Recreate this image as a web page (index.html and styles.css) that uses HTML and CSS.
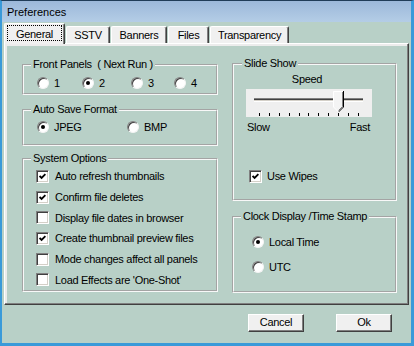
FILE: index.html
```html
<!DOCTYPE html>
<html lang="en">

<head>
    <meta charset="UTF-8">
    <title>Preferences</title>
    <link rel="stylesheet" href="styles.css">
</head>

<body>
    <div class="window">
        <div class="titlebar">Preferences</div>

        <div class="tabs">
            <div class="tab tab-active"><span class="focus">General</span></div>
            <div class="tab tab-sstv">SSTV</div>
            <div class="tab tab-banners">Banners</div>
            <div class="tab tab-files">Files</div>
            <div class="tab tab-transparency">Transparency</div>
        </div>

        <div class="panel">
            <div class="col col-left">
                <fieldset class="group group-panels">
                    <legend>Front Panels&nbsp; ( Next Run )</legend>
                    <div class="group-body panels-row">
                        <div class="opt"><span class="radio"></span>1</div>
                        <div class="opt"><span class="radio checked"></span>2</div>
                        <div class="opt"><span class="radio"></span>3</div>
                        <div class="opt"><span class="radio"></span>4</div>
                    </div>
                </fieldset>

                <fieldset class="group group-save">
                    <legend>Auto Save Format</legend>
                    <div class="group-body save-row">
                        <div class="opt"><span class="radio checked"></span>JPEG</div>
                        <div class="opt"><span class="radio"></span>BMP</div>
                    </div>
                </fieldset>

                <fieldset class="group group-system">
                    <legend>System Options</legend>
                    <div class="group-body system-list">
                        <div class="opt check-row">
                            <span class="check"><svg width="7" height="7" viewBox="0 0 7 7"><polyline points="0.6,3 2.6,5 6.4,1.2" fill="none" stroke="#000" stroke-width="1.8"/></svg></span>
                            Auto refresh thumbnails
                        </div>
                        <div class="opt check-row">
                            <span class="check"><svg width="7" height="7" viewBox="0 0 7 7"><polyline points="0.6,3 2.6,5 6.4,1.2" fill="none" stroke="#000" stroke-width="1.8"/></svg></span>
                            Confirm file deletes
                        </div>
                        <div class="opt check-row"><span class="check"></span>Display file dates in browser</div>
                        <div class="opt check-row">
                            <span class="check"><svg width="7" height="7" viewBox="0 0 7 7"><polyline points="0.6,3 2.6,5 6.4,1.2" fill="none" stroke="#000" stroke-width="1.8"/></svg></span>
                            Create thumbnail preview files
                        </div>
                        <div class="opt check-row"><span class="check"></span>Mode changes affect all panels</div>
                        <div class="opt check-row"><span class="check"></span>Load Effects are 'One-Shot'</div>
                    </div>
                </fieldset>
            </div>

            <div class="col col-right">
                <fieldset class="group group-slide">
                    <legend>Slide Show</legend>
                    <div class="group-body slide-body">
                        <div class="speed-label">Speed</div>
                        <svg class="slider" width="126" height="28" viewBox="0 0 126 28">
                            <rect x="0" y="0" width="126" height="28" fill="#efefef"/>
                            <!-- track -->
                            <rect x="8" y="9" width="109" height="1" fill="#808080"/>
                            <rect x="8" y="10" width="109" height="1" fill="#404040"/>
                            <rect x="8" y="11" width="109" height="1" fill="#d4d0c8"/>
                            <rect x="8" y="12" width="109" height="1" fill="#fff"/>
                            <!-- ticks -->
                            <g stroke="#000" stroke-width="1">
                                <line x1="13.5" y1="24" x2="13.5" y2="27"/>
                                <line x1="23.5" y1="24" x2="23.5" y2="27"/>
                                <line x1="33.5" y1="24" x2="33.5" y2="27"/>
                                <line x1="43.5" y1="24" x2="43.5" y2="27"/>
                                <line x1="53.5" y1="24" x2="53.5" y2="27"/>
                                <line x1="62.5" y1="24" x2="62.5" y2="27"/>
                                <line x1="72.5" y1="24" x2="72.5" y2="27"/>
                                <line x1="82.5" y1="24" x2="82.5" y2="27"/>
                                <line x1="92.5" y1="24" x2="92.5" y2="27"/>
                                <line x1="102.5" y1="24" x2="102.5" y2="27"/>
                                <line x1="112.5" y1="24" x2="112.5" y2="27"/>
                            </g>
                            <!-- thumb -->
                            <polygon points="87,2 98,2 98,18 92.5,23.5 87,18" fill="#f4f4f4"/>
                            <polyline points="87.5,18 87.5,2.5 97,2.5" fill="none" stroke="#fff" stroke-width="1"/>
                            <polyline points="96.5,3 96.5,17.5 92.5,21.5" fill="none" stroke="#808080" stroke-width="1"/>
                            <polyline points="97.5,2 97.5,18 92.5,23" fill="none" stroke="#000" stroke-width="1"/>
                            <polyline points="87.5,18 92.5,23" fill="none" stroke="#fff" stroke-width="1"/>
                        </svg>
                        <div class="slider-labels"><span>Slow</span><span>Fast</span></div>
                        <div class="opt wipes-row">
                            <span class="check"><svg width="7" height="7" viewBox="0 0 7 7"><polyline points="0.6,3 2.6,5 6.4,1.2" fill="none" stroke="#000" stroke-width="1.8"/></svg></span>
                            Use Wipes
                        </div>
                    </div>
                </fieldset>

                <fieldset class="group group-clock">
                    <legend>Clock Display /Time Stamp</legend>
                    <div class="group-body clock-list">
                        <div class="opt"><span class="radio checked"></span>Local Time</div>
                        <div class="opt"><span class="radio"></span>UTC</div>
                    </div>
                </fieldset>
            </div>
        </div>

        <div class="buttons">
            <div class="button">Cancel</div>
            <div class="button">Ok</div>
        </div>
    </div>
</body>

</html>
```

FILE: styles.css
```css
* {
    box-sizing: border-box;
}

body {
    margin: 0;
    padding: 0;
    font-family: "Liberation Sans", Arial, sans-serif;
    font-size: 11px;
    color: #000;
    background-color: #b8d0c7;
}

.window {
    width: 414px;
    height: 346px;
    display: flex;
    flex-direction: column;
    background-color: #b8d0c7;
    border: 2px solid #3a9ad9;
    border-top: 1px solid #203c58;
    border-right-width: 3px;
    border-bottom-width: 3px;
    letter-spacing: -0.3px;
}

.titlebar {
    height: 21px;
    flex: 0 0 21px;
    padding-left: 5px;
    line-height: 22px;
    letter-spacing: 0;
    background: linear-gradient(to bottom, #9cb8da, #b4cde6);
}

/* tab strip */
.tabs {
    height: 21px;
    flex: 0 0 21px;
    display: flex;
    align-items: flex-end;
    padding-left: 2px;
}

.tab {
    height: 17px;
    margin-left: 1px;
    padding-top: 1px;
    line-height: 14px;
    text-align: center;
    background-color: #f0f0f0;
    border: 1px solid;
    border-color: #fff #404040 transparent #fff;
    border-bottom: none;
    border-radius: 2px 2px 0 0;
    box-shadow: inset -1px 0 0 #808080;
}

.tab-active {
    position: relative;
    z-index: 1;
    width: 61px;
    height: 21px;
    margin-left: 0;
    margin-bottom: -1px;
    padding: 1px 2px 0 2px;
}

.tab-active .focus {
    display: block;
    height: 16px;
    padding-top: 1px;
    line-height: 14px;
    border: 1px dotted #000;
}

.tab-sstv { width: 44px; }
.tab-banners { width: 56px; }
.tab-files { width: 41px; }
.tab-transparency { width: 79px; }

/* page */
.panel {
    height: 262px;
    flex: 0 0 262px;
    margin: 0 2px;
    display: flex;
    gap: 14px;
    padding: 13px 10px 0 17px;
    border: 1px solid;
    border-color: #fff #404040 #404040 #fff;
    box-shadow: inset -1px -1px 0 #808080, inset 2px 2px 0 #ececec;
}

.col-left {
    width: 196px;
    margin-top: 1px;
}

.col-right {
    width: 165px;
}

.group {
    margin: 0;
    padding: 0;
    min-width: 0;
    border: 2px groove #f8f8f8;
}

.group legend {
    margin-left: 7px;
    padding: 0 2px;
    line-height: 13px;
}

.group-slide legend {
    margin-left: 8px;
}

.group-panels { height: 37px; }
.group-save { height: 43px; margin-top: 8px; }
.group-system { height: 140px; margin-top: 6px; }
.group-slide { height: 144px; }
.group-clock { height: 83px; margin-top: 9px; }

.opt {
    display: flex;
    align-items: center;
    gap: 5px;
    height: 16px;
}

.panels-row {
    display: grid;
    grid-template-columns: 45px 49px 43px auto;
    padding: 4px 0 0 13px;
}

.save-row {
    display: grid;
    grid-template-columns: 90px auto;
    padding: 3px 0 0 13px;
}

.system-list {
    padding: 1px 0 0 12px;
}

.check-row {
    height: 20.7px;
    gap: 6px;
}

.clock-list {
    display: flex;
    flex-direction: column;
    row-gap: 9px;
    padding: 11px 0 0 18px;
}

/* controls */
.radio {
    width: 12px;
    height: 12px;
    flex: 0 0 12px;
    display: flex;
    align-items: center;
    justify-content: center;
    border-radius: 50%;
    background-color: #fff;
    border: 1px solid;
    border-color: #808080 #f4f4f4 #f4f4f4 #808080;
    box-shadow: inset 1px 1px 0 #404040;
}

.radio.checked::after {
    content: "";
    width: 4px;
    height: 4px;
    border-radius: 50%;
    background-color: #000;
}

.check {
    width: 13px;
    height: 13px;
    flex: 0 0 13px;
    display: flex;
    align-items: center;
    justify-content: center;
    background-color: #fff;
    border: 1px solid;
    border-color: #808080 #fff #fff #808080;
    box-shadow: inset 1px 1px 0 #404040, inset -1px -1px 0 #d4d0c8;
}

/* slide show */
.slide-body {
    padding-left: 12px;
}

.speed-label {
    width: 122px;
    margin-top: 3px;
    line-height: 13px;
    text-align: center;
}

.slider {
    display: block;
    margin-top: 3px;
}

.slider-labels {
    width: 124px;
    margin-top: 4px;
    padding-left: 1px;
    display: flex;
    justify-content: space-between;
    line-height: 13px;
}

.wipes-row {
    margin: 34px 0 0 3px;
    gap: 5px;
}

/* buttons */
.buttons {
    display: flex;
    justify-content: flex-end;
    gap: 32px;
    margin-top: 9px;
    padding-right: 19px;
}

.button {
    width: 56px;
    height: 18px;
    line-height: 15px;
    text-align: center;
    background-color: #f0f0f0;
    border: 1px solid;
    border-color: #fff #404040 #404040 #fff;
    box-shadow: inset -1px -1px 0 #808080;
}
```
